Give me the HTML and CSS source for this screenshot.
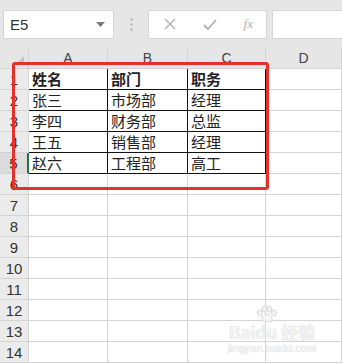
FILE: index.html
```html
<!DOCTYPE html>
<html lang="zh">
<head>
    <meta charset="UTF-8">
    <title>Excel - 表格</title>
    <link rel="stylesheet" href="styles.css">
</head>
<body>
    <!-- 编辑栏 -->
    <div class="toolbar">
        <div class="namebox">
            <span>E5</span>
            <svg class="caret" width="9" height="5" viewBox="0 0 9 5"><path d="M0 0h9L4.5 5z" fill="#7a7a7a"/></svg>
        </div>
        <svg class="grip" width="3" height="13" viewBox="0 0 3 13">
            <circle cx="1.5" cy="1.5" r="1.2" fill="#b5b5b5"/>
            <circle cx="1.5" cy="6.5" r="1.2" fill="#b5b5b5"/>
            <circle cx="1.5" cy="11.5" r="1.2" fill="#b5b5b5"/>
        </svg>
        <div class="fxbtns">
            <svg width="12" height="12" viewBox="0 0 12 12"><path d="M1 1l10 10M11 1L1 11" stroke="#b0b0b0" stroke-width="1.4" fill="none"/></svg>
            <svg width="14" height="11" viewBox="0 0 14 11"><path d="M1 6l4 4 8-9" stroke="#b0b0b0" stroke-width="1.8" fill="none"/></svg>
            <span class="fx">fx</span>
        </div>
        <div class="fxinput"></div>
    </div>

    <!-- 工作表 -->
    <div class="sheet">
        <div class="grid">
            <div class="corner"><svg width="8" height="8" viewBox="0 0 8 8"><path d="M8 0v8H0z" fill="#c4c4c4"/></svg></div>
            <div class="colhead">A</div>
            <div class="colhead">B</div>
            <div class="colhead">C</div>
            <div class="colhead">D</div>

            <div class="rowhead dark">1</div>
            <div class="cell data bold">姓名</div>
            <div class="cell data bold">部门</div>
            <div class="cell data bold">职务</div>
            <div class="cell"></div>

            <div class="rowhead dark">2</div>
            <div class="cell data">张三</div>
            <div class="cell data">市场部</div>
            <div class="cell data">经理</div>
            <div class="cell"></div>

            <div class="rowhead dark">3</div>
            <div class="cell data">李四</div>
            <div class="cell data">财务部</div>
            <div class="cell data">总监</div>
            <div class="cell"></div>

            <div class="rowhead dark">4</div>
            <div class="cell data">王五</div>
            <div class="cell data">销售部</div>
            <div class="cell data">经理</div>
            <div class="cell"></div>

            <div class="rowhead dark sel">5</div>
            <div class="cell data">赵六</div>
            <div class="cell data">工程部</div>
            <div class="cell data">高工</div>
            <div class="cell"></div>

            <div class="rowhead">6</div><div class="cell"></div><div class="cell"></div><div class="cell"></div><div class="cell"></div>
            <div class="rowhead">7</div><div class="cell"></div><div class="cell"></div><div class="cell"></div><div class="cell"></div>
            <div class="rowhead">8</div><div class="cell"></div><div class="cell"></div><div class="cell"></div><div class="cell"></div>
            <div class="rowhead">9</div><div class="cell"></div><div class="cell"></div><div class="cell"></div><div class="cell"></div>
            <div class="rowhead">10</div><div class="cell"></div><div class="cell"></div><div class="cell"></div><div class="cell"></div>
            <div class="rowhead">11</div><div class="cell"></div><div class="cell"></div><div class="cell"></div><div class="cell"></div>
            <div class="rowhead">12</div><div class="cell"></div><div class="cell"></div><div class="cell"></div><div class="cell"></div>
            <div class="rowhead">13</div><div class="cell"></div><div class="cell"></div><div class="cell"></div><div class="cell"></div>
            <div class="rowhead">14</div><div class="cell"></div><div class="cell"></div><div class="cell"></div><div class="cell"></div>
        </div>

        <!-- 红色标注框 -->
        <div class="mark"></div>

        <!-- 水印 -->
        <div class="watermark">
            <svg class="paw" width="22" height="16" viewBox="0 0 22 16">
                <g fill="#f4f4f4" stroke="#cfcfcf" stroke-width="0.8">
                    <ellipse cx="4" cy="7" rx="2.5" ry="3"/>
                    <ellipse cx="8.5" cy="3" rx="2.5" ry="3"/>
                    <ellipse cx="13.5" cy="3" rx="2.5" ry="3"/>
                    <ellipse cx="18" cy="7" rx="2.5" ry="3"/>
                    <path d="M11 8c-3 0-6 4-5 6.5 1 1.5 3 .8 5 .8s4 .7 5-.8c1-2.5-2-6.5-5-6.5z"/>
                </g>
            </svg>
            <div class="wm-logo">Bai<span>du</span> 经验</div>
            <div class="wm-url">jingyan.baidu.com</div>
        </div>
    </div>
</body>
</html>
```

FILE: styles.css
```css
body {
    margin: 0;
    width: 342px;
    height: 364px;
    overflow: hidden;
    background: #fff;
    font-family: "Liberation Sans", Arial, sans-serif;
}
.toolbar {
    height: 48px;
    background: #e6e6e6;
    display: flex;
    align-items: center;
    box-sizing: border-box;
    padding-left: 3px;
}
.namebox {
    width: 111px;
    height: 29px;
    box-sizing: border-box;
    background: #fff;
    border: 1px solid #d6d6d6;
    display: flex;
    align-items: center;
    justify-content: space-between;
    padding: 0 8px 0 6px;
    font-size: 15px;
    color: #333;
}
.grip {
    margin: 0 15px 0 16px;
}
.fxbtns {
    width: 119px;
    height: 29px;
    box-sizing: border-box;
    background: #fff;
    border: 1px solid #d6d6d6;
    display: flex;
    align-items: center;
    padding: 0 13px 0 15px;
    justify-content: space-between;
}
.fx {
    font-family: "Liberation Serif", serif;
    font-style: italic;
    font-size: 13px;
    color: #b0b0b0;
}
.fxinput {
    flex: 1;
    height: 29px;
    margin-left: 5px;
    box-sizing: border-box;
    background: #fff;
    border: 1px solid #d6d6d6;
    border-right: none;
}
.sheet {
    position: relative;
}
.grid {
    display: grid;
    grid-template-columns: 29px 79px 80px 78px 1fr;
    grid-auto-rows: 21px;
}
.grid > div {
    box-sizing: border-box;
    border-right: 1px solid #d4d4d4;
    border-bottom: 1px solid #d4d4d4;
}
.corner {
    background: #e6e6e6;
    display: flex;
    align-items: flex-end;
    justify-content: flex-end;
    padding: 0 4px 4px 0;
}
.colhead {
    background: #e6e6e6;
    text-align: center;
    font-size: 14px;
    line-height: 20px;
    color: #444;
}
.rowhead {
    background: #ebebeb;
    text-align: center;
    font-size: 15px;
    line-height: 21px;
    color: #333;
}
.rowhead.sel {
    background: #dcdcdc;
    border-right: 2px solid #217346 !important;
}
.cell {
    background: #fff;
}
.grid > .data {
    border-right: 1px solid #111;
    border-bottom: 1px solid #111;
    font-family: "Noto Sans CJK SC", sans-serif;
    font-size: 15px;
    line-height: 19px;
    padding-left: 3px;
    color: #222;
}
.bold {
    font-weight: bold;
}
.mark {
    position: absolute;
    left: 12px;
    top: 14px;
    width: 257px;
    height: 128px;
    box-sizing: border-box;
    border: 3px solid #e8302a;
    border-radius: 3px;
}
.watermark {
    position: absolute;
    left: 222px;
    top: 258px;
    width: 100px;
    text-align: center;
    color: #f2f2f2;
    text-shadow: 0 0 1px #c8c8c8;
}
.paw {
    display: block;
    margin: 0 auto 0 34px;
}
.wm-logo {
    font-size: 17px;
    font-weight: bold;
    font-family: "Noto Sans CJK SC", sans-serif;
    line-height: 20px;
}
.wm-url {
    font-size: 11px;
    line-height: 12px;
}
```
